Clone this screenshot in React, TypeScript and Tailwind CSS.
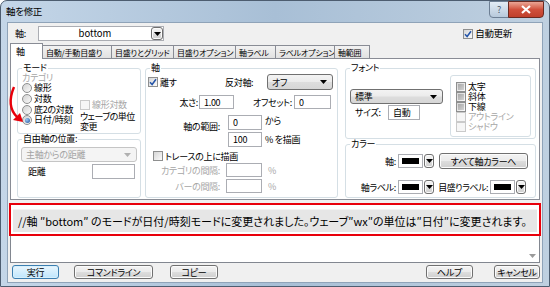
import React from "react";

const ui = "font-['Noto_Sans_CJK_JP','Liberation_Sans',sans-serif] [font-feature-settings:'palt']";

function CheckBox({ checked, shade, disabled }: { checked?: boolean; shade?: boolean; disabled?: boolean }) {
  return (
    <span
      className={`flex h-[10px] w-[10px] shrink-0 items-center justify-center border ${
        disabled ? "border-[#cacaca] bg-[#f6f6f6]" : "border-[#8e8f8f] bg-linear-to-br from-[#d6d6d6] to-[#fbfbfb]"
      }`}
    >
      {shade && <span className="h-[6px] w-[6px] bg-linear-to-br from-[#a8a8a8] to-[#d2d2d2]" />}
      {checked && (
        <svg width="8" height="8" viewBox="0 0 8 8">
          <path d="M1 4.3 L3.1 6.5 L7 1.2" fill="none" stroke="#2454a8" strokeWidth="1.5" />
        </svg>
      )}
    </span>
  );
}

function Radio({ on }: { on?: boolean }) {
  return (
    <span className="flex h-[10px] w-[10px] shrink-0 items-center justify-center rounded-full border border-[#8e8f8f] bg-linear-to-br from-[#d2d2d2] to-[#fafafa]">
      {on && <span className="h-[5px] w-[5px] rounded-full bg-[radial-gradient(circle_at_35%_35%,#9cc8f2,#1b4f9c)]" />}
    </span>
  );
}

function Caret({ color = "#000" }: { color?: string }) {
  return (
    <svg width="7" height="4" viewBox="0 0 7 4">
      <path d="M0 0h7L3.5 4z" fill={color} />
    </svg>
  );
}

function Field({ className = "", children }: { className?: string; children?: React.ReactNode }) {
  return (
    <div className={`flex shrink-0 items-center border border-[#abadb3] bg-white pl-[4px] leading-[11px] ${className}`}>
      {children}
    </div>
  );
}

const btnBg =
  "bg-[linear-gradient(#f3f3f3,#ebebeb_48%,#dddddd_52%,#cfcfcf)] border border-[#707070] rounded-[3px] shadow-[inset_0_0_0_1px_#fbfbfb]";

function Btn({ className = "", children }: { className?: string; children: React.ReactNode }) {
  return (
    <div className={`flex shrink-0 items-center justify-center leading-[11px] whitespace-nowrap ${btnBg} ${className}`}>
      {children}
    </div>
  );
}

function Combo({ className = "", children, disabled }: { className?: string; children: React.ReactNode; disabled?: boolean }) {
  return (
    <div
      className={`flex shrink-0 items-center justify-between rounded-[3px] border pl-[4px] pr-[5px] leading-[11px] ${
        disabled
          ? "border-[#c5c5c5] bg-[#f4f4f4] text-[#a3a3a3]"
          : "border-[#707070] bg-[linear-gradient(#f3f3f3,#ebebeb_48%,#dddddd_52%,#d6d6d6)]"
      } ${className}`}
    >
      <span className="whitespace-nowrap">{children}</span>
      <Caret color={disabled ? "#b0b0b0" : "#000"} />
    </div>
  );
}

function ColorPick({ className = "" }: { className?: string }) {
  return (
    <div className={`flex shrink-0 items-center gap-[1px] ${className}`}>
      <div className="flex h-full flex-1 items-center border border-[#abadb3] bg-white px-[3px]">
        <div className="h-[6px] w-full bg-black" />
      </div>
      <div className={`flex h-full w-[10px] items-center justify-center ${btnBg} rounded-[1px]`}>
        <Caret />
      </div>
    </div>
  );
}

function Group({ label, className = "", children }: { label: string; className?: string; children?: React.ReactNode }) {
  return (
    <fieldset className={`m-0 min-w-0 shrink-0 rounded-[3px] border border-[#d5dfe5] p-0 ${className}`}>
      <legend className="ml-[4px] px-[1px] leading-[10px] whitespace-nowrap">{label}</legend>
      {children}
    </fieldset>
  );
}

const tabs = [
  { t: "自動/手動目盛り", w: "w-[70px]" },
  { t: "目盛りとグリッド", w: "w-[63px]" },
  { t: "目盛りオプション", w: "w-[63px]" },
  { t: "軸ラベル", w: "w-[41px]" },
  { t: "ラベルオプション", w: "w-[60px]" },
  { t: "軸範囲", w: "w-[36px]" },
];

export default function App() {
  return (
    <div className={`${ui} relative h-[287px] w-[550px] overflow-hidden bg-white text-[9px] tracking-[-0.3px] text-black`}>
      <div className="flex h-full flex-col rounded-t-[7px] border border-[#4d5d70] bg-linear-to-r from-[#c4d6e8] via-[#a8bfd6] to-[#bfd0e0]">
        {/* title bar */}
        <div className="flex h-[21px] shrink-0 items-start justify-between">
          <span className="pl-[5px] pt-[5px] text-[9.5px] leading-[11px]">軸を修正</span>
          <div className="mr-[5px] flex">
            <div className="flex h-[17px] w-[20px] items-center justify-center rounded-bl-[4px] border border-[#6d7f94] bg-linear-to-b from-[#e3ecf5] to-[#b7c9db] text-[9px] text-[#4a5a6e]">
              ?
            </div>
            <div className="-ml-px flex h-[17px] w-[36px] items-center justify-center rounded-br-[4px] border border-[#6a2a22] bg-linear-to-b from-[#e9a595] via-[#d0503c] to-[#c0402c]">
              <svg width="10" height="9" viewBox="0 0 10 9">
                <path d="M1 1 L9 8 M9 1 L1 8" stroke="#fff" strokeWidth="2.2" />
              </svg>
            </div>
          </div>
        </div>

        {/* dialog body */}
        <div className="mx-[6px] mb-[3px] flex flex-1 flex-col border border-[#8fa3b8] bg-[#f0f0f0]">
          {/* axis row */}
          <div className="flex h-[21px] shrink-0 items-center pl-[7px] pr-[30px]">
            <span className="w-[23px] leading-[11px]">軸:</span>
            <div className="flex h-[15px] w-[126px] items-center border border-[#abadb3] bg-white">
              <span className="flex-1 text-center text-[9.5px] leading-[11px] tracking-normal">bottom</span>
              <div className={`flex h-[13px] w-[12px] items-center justify-center ${btnBg} rounded-[1px]`}>
                <Caret />
              </div>
            </div>
            <div className="ml-auto flex items-center gap-[2px]">
              <CheckBox checked />
              <span className="text-[9.5px] leading-[11px]">自動更新</span>
            </div>
          </div>

          {/* tabs */}
          <div className="relative z-10 -mb-px flex h-[15px] shrink-0 items-end pl-[2px]">
            <div className="flex h-[16px] w-[33px] items-start border border-b-0 border-[#898c95] bg-white pl-[5px] pt-[2px] leading-[11px]">
              軸
            </div>
            {tabs.map((tab) => (
              <div
                key={tab.t}
                className={`-ml-px flex h-[14px] ${tab.w} items-center border border-[#898c95] bg-linear-to-b from-[#f2f2f2] to-[#e1e1e1] pl-[3px] text-[8px] leading-[11px] tracking-[-0.2px] whitespace-nowrap`}
              >
                {tab.t}
              </div>
            ))}
          </div>

          {/* tab panel */}
          <div className="mx-[2px] flex h-[142px] shrink-0 gap-[4px] border border-[#898c95] bg-white pl-[6px] pt-[4px]">
            {/* left column */}
            <div className="flex w-[124px] shrink-0 flex-col">
              <Group label="モード" className="h-[71px] w-[124px]">
                <div className="pl-[4px] leading-[10px] text-[#a6a6a6]">カテゴリ</div>
                <div className="flex">
                  <div className="flex w-[62px] flex-col pl-[4px]">
                    {["線形", "対数", "底2の対数", "日付/時刻"].map((r, i) => (
                      <div key={r} className="flex h-[10.7px] items-center gap-[2px] leading-[10px] whitespace-nowrap">
                        <Radio on={i === 3} />
                        <span>{r}</span>
                      </div>
                    ))}
                  </div>
                  <div className="flex flex-col">
                    <div className="mt-[16px] flex h-[12px] items-center gap-[2px] text-[#a6a6a6]">
                      <CheckBox disabled />
                      <span className="leading-[10px]">線形対数</span>
                    </div>
                    <div className="mt-[1px] leading-[10px] tracking-[-0.5px] whitespace-nowrap">
                      ウェーブの単位
                      <br />
                      変更
                    </div>
                  </div>
                </div>
              </Group>
              <Group label="自由軸の位置:" className="h-[64px] w-[124px]">
                <Combo disabled className="mx-[3px] mt-[3px] h-[15px]">
                  主軸からの距離
                </Combo>
                <div className="mt-[2px] flex items-center pl-[10px]">
                  <span className="w-[64px] leading-[11px]">距離</span>
                  <Field className="h-[15px] w-[43px]" />
                </div>
              </Group>
            </div>

            {/* axis group */}
            <Group label="軸" className="h-[135px] w-[193px]">
              <div className="mt-[1px] flex h-[16px] items-center pl-[2px]">
                <div className="flex w-[77px] items-center gap-[2px]">
                  <CheckBox checked />
                  <span className="leading-[11px]">離す</span>
                </div>
                <span className="w-[42px] leading-[11px]">反対軸:</span>
                <Combo className="h-[16px] w-[66px]">オフ</Combo>
              </div>
              <div className="mt-[5px] flex h-[14px] items-center pl-[2px]">
                <span className="w-[51px] pr-[1px] text-right leading-[11px]">太さ:</span>
                <Field className="h-[14px] w-[35px]">1.00</Field>
                <span className="w-[60px] pr-[2px] text-right leading-[11px] whitespace-nowrap">オフセット:</span>
                <Field className="h-[14px] w-[37px]">0</Field>
              </div>
              <div className="mt-[6px] flex pl-[2px]">
                <span className="w-[72px] pt-[6px] text-right leading-[12px]">軸の範囲:</span>
                <div className="ml-[8px] flex flex-col gap-[2px]">
                  <Field className="h-[15px] w-[34px]">0</Field>
                  <Field className="h-[15px] w-[34px]">100</Field>
                </div>
                <div className="ml-[3px] flex flex-col leading-[12px]">
                  <span>から</span>
                  <span className="mt-[7px]">% を描画</span>
                </div>
              </div>
              <div className="mt-[3px] flex h-[12px] items-center gap-[2px] pl-[7px]">
                <CheckBox />
                <span className="leading-[11px]">トレースの上に描画</span>
              </div>
              <div className="mt-[1px] flex h-[14px] items-center pl-[2px] text-[#a6a6a6]">
                <span className="w-[72px] text-right leading-[11px] whitespace-nowrap">カテゴリの間隔:</span>
                <Field className="ml-[6px] h-[14px] w-[36px]" />
                <span className="ml-[6px] leading-[11px]">%</span>
              </div>
              <div className="mt-[2px] flex h-[14px] items-center pl-[2px] text-[#a6a6a6]">
                <span className="w-[72px] text-right leading-[11px]">バーの間隔:</span>
                <Field className="ml-[6px] h-[14px] w-[36px]" />
                <span className="ml-[6px] leading-[11px]">%</span>
              </div>
            </Group>

            {/* right column */}
            <div className="ml-[3px] flex w-[191px] shrink-0 flex-col">
              <Group label="フォント" className="h-[76px] w-[191px]">
                <div className="flex">
                  <div className="flex w-[104px] flex-col">
                    <Combo className="ml-[4px] mt-[16px] h-[15px] w-[93px]">標準</Combo>
                    <div className="mt-[1px] flex items-center pl-[9px]">
                      <span className="w-[33px] leading-[11px]">サイズ:</span>
                      <Field className="h-[15px] w-[32px]">自動</Field>
                    </div>
                  </div>
                  <div className="mt-[2px] flex h-[62px] w-[81px] flex-col rounded-[3px] border border-[#d5dfe5] pl-[5px] pt-[6px]">
                    {[
                      { t: "太字", d: false },
                      { t: "斜体", d: false },
                      { t: "下線", d: false },
                      { t: "アウトライン", d: true },
                      { t: "シャドウ", d: true },
                    ].map((c) => (
                      <div key={c.t} className={`flex h-[10px] items-center gap-[2px] ${c.d ? "text-[#a6a6a6]" : ""}`}>
                        <CheckBox shade={!c.d} disabled={c.d} />
                        <span className="leading-[10px]">{c.t}</span>
                      </div>
                    ))}
                  </div>
                </div>
              </Group>
              <Group label="カラー" className="h-[59px] w-[191px]">
                <div className="mt-[4px] flex h-[16px] items-center">
                  <span className="w-[52px] pr-[2px] text-right leading-[11px]">軸:</span>
                  <ColorPick className="h-[14px] w-[36px]" />
                  <Btn className="ml-[5px] h-[16px] w-[89px]">すべて軸カラーへ</Btn>
                </div>
                <div className="mt-[11px] flex h-[14px] items-center">
                  <span className="w-[52px] pr-[2px] text-right leading-[11px] whitespace-nowrap">軸ラベル:</span>
                  <ColorPick className="h-[14px] w-[36px]" />
                  <span className="w-[56px] pr-[2px] text-right leading-[11px] tracking-[-0.5px] whitespace-nowrap">目盛りラベル:</span>
                  <ColorPick className="h-[14px] w-[36px]" />
                </div>
              </Group>
            </div>
          </div>

          {/* command text area */}
          <div className="relative mx-[2px] mt-[3px] h-[60px] shrink-0 border border-[#828790] bg-white">
            <div className="mx-[2px] mt-[5px] flex h-[23px] items-center border-t border-[#f4f4f4] bg-[#e6e6e6] pl-[5px] text-[11px] leading-[13px] tracking-normal whitespace-nowrap">
              //軸 ″bottom″ のモードが日付/時刻モードに変更されました。ウェーブ″wx″の単位は″日付″に変更されます。
            </div>
            <div className="absolute right-[3px] bottom-[4px]">
              <Caret color="#9a9a9a" />
            </div>
            <div className="absolute inset-x-[-2px] -top-px h-[33px] border-2 border-[#e8000b]" />
          </div>

          {/* buttons */}
          <div className="mt-[2px] flex h-[14px] shrink-0 items-center pl-[4px] pr-[2px]">
            <div className="flex h-[14px] w-[47px] items-center justify-center rounded-[3px] border border-[#3c7fb1] bg-linear-to-b from-[#eaf6fd] to-[#bee6fd] leading-[11px] shadow-[inset_0_0_0_1px_#d8f0fc]">
              実行
            </div>
            <Btn className="ml-[15px] h-[14px] w-[79px]">コマンドライン</Btn>
            <Btn className="ml-[17px] h-[14px] w-[48px]">コピー</Btn>
            <Btn className="ml-auto h-[14px] w-[47px]">ヘルプ</Btn>
            <Btn className="ml-[21px] h-[14px] w-[46px]">キャンセル</Btn>
          </div>
        </div>
      </div>

      {/* red annotation arrow */}
      <svg className="absolute left-[4px] top-[84px]" width="24" height="42" viewBox="0 0 24 42">
        <path d="M10 3 Q2 22 13 33" fill="none" stroke="#e8000b" strokeWidth="2.4" />
        <path d="M19 38 L9 36 L16 29 Z" fill="#e8000b" />
      </svg>
    </div>
  );
}
